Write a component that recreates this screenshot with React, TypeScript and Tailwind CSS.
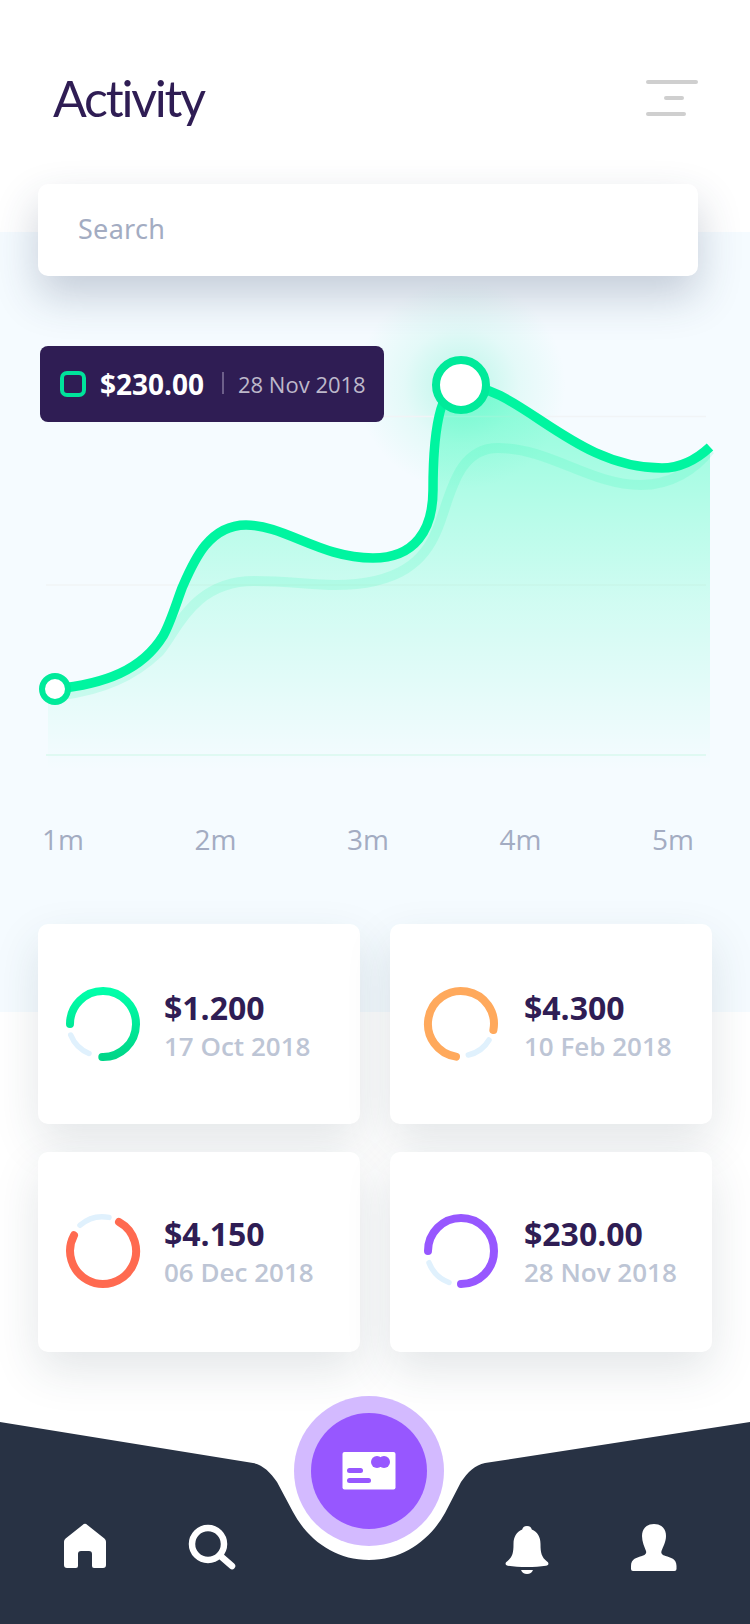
import React from "react";

const mainD =
  "M55 689 C105 684 142 670 163 636 C170 624 176 604 182 588 C193 563 208 525 246 525 C285 525 320 558 373 558 C415 558 433 530 433 490 C433 440 438 385 461 385 C520 385 572 468 662 468 C680 468 696 460 710 447";
const backD =
  "M62 695 C105 690 135 675 158 653 C175 636 190 581 254 581 C290 581 310 585 335 585 C400 585 425 560 437 530 C450 500 455 448 498 448 C550 448 590 485 641 485 C670 485 695 470 710 450";
const areaD = `${mainD} L710 770 L48 770 L48 689 Z`;

type Ring = {
  amount: string;
  date: string;
  arc: string;
  light: string;
  stroke: string;
  pad: string;
  gap: string;
  shift: string;
  ringShift: string;
};

const cards: Ring[] = [
  { amount: "$1.200", date: "17 Oct 2018", arc: "M-33 0 A33 33 0 1 1 -0.7 33", light: "M-32.3 11 A34 34 0 0 0 -14 29.5", stroke: "url(#ringGreen)", pad: "pl-[27px]", gap: "ml-[23px]", shift: "mt-[5px]", ringShift: "mt-0" },
  { amount: "$4.300", date: "10 Feb 2018", arc: "M-5 32.6 A33 33 0 1 1 32.4 6", light: "M7.3 31 A32 32 0 0 0 28 16", stroke: "#ffa95c", pad: "pl-[33px]", gap: "ml-[25px]", shift: "mt-[5px]", ringShift: "mt-0" },
  { amount: "$4.150", date: "06 Dec 2018", arc: "M16 -29 A33 33 0 1 1 -29 -15.7", light: "M-23 -25.7 A34 34 0 0 1 6 -33.6", stroke: "#ff6a50", pad: "pl-[27px]", gap: "ml-[23px]", shift: "mt-[1px]", ringShift: "-mt-[2px]" },
  { amount: "$230.00", date: "28 Nov 2018", arc: "M-33 0 A33 33 0 1 1 0 33", light: "M-32 11.7 A34 34 0 0 0 -12 31.5", stroke: "#9757ff", pad: "pl-[33px]", gap: "ml-[25px]", shift: "mt-[1px]", ringShift: "-mt-[2px]" },
];

function Card({ c }: { c: Ring }) {
  return (
    <div className={`h-[200px] rounded-[10px] bg-white shadow-[0_18px_46px_rgba(40,60,80,0.13)] flex items-center ${c.pad}`}>
      <svg width="76" height="76" viewBox="-38 -38 76 76" className={`shrink-0 ${c.ringShift}`}>
        <defs>
          <linearGradient id="ringGreen" x1="0" y1="0" x2="0" y2="1">
            <stop offset="0" stopColor="#00ffa9" />
            <stop offset="1" stopColor="#00d688" />
          </linearGradient>
        </defs>
        <path d={c.light} fill="none" stroke="#e0f1fd" strokeWidth="5.5" strokeLinecap="round" />
        <path d={c.arc} fill="none" stroke={c.stroke} strokeWidth="8" strokeLinecap="round" />
      </svg>
      <div className={`${c.gap} ${c.shift}`}>
        <div className="text-[32px] leading-[38px] font-bold text-[#2f1d54]">{c.amount}</div>
        <div className="text-[26px] leading-[38px] font-semibold text-[#bdc5d5]">{c.date}</div>
      </div>
    </div>
  );
}

export default function App() {
  return (
    <div className="relative w-[750px] h-[1624px] overflow-hidden bg-white font-['Open_Sans',sans-serif]">
      <header className="relative h-[184px] pl-[53px] pr-[52px] flex justify-between">
        <h1 className="mt-[66px] font-['Lato',sans-serif] font-normal text-[50px] leading-[64px] tracking-[-2.2px] text-[#2f1d54]">
          Activity
        </h1>
        <div className="mt-[80px] w-[52px] flex flex-col gap-[12px]">
          <div className="h-[4px] w-[52px] rounded-full bg-[#cfcfcf]" />
          <div className="h-[4px] w-[20px] ml-[18px] rounded-full bg-[#cfcfcf]" />
          <div className="h-[4px] w-[40px] rounded-full bg-[#cfcfcf]" />
        </div>
      </header>

      <div className="relative z-10 mx-[38px] w-[660px] h-[92px] rounded-[10px] bg-white shadow-[0_20px_44px_rgba(40,60,90,0.24)] flex items-center pl-[40px] -mb-[44px]">
        <span className="font-['Noto_Sans',sans-serif] text-[27px] leading-[36px] -mt-[2px] tracking-[0.3px] text-[#a3acc2]">Search</span>
      </div>

      <section className="relative h-[780px] bg-[#f5fbff]">
        <div className="relative h-[578px]">
          <svg width="750" height="578" viewBox="0 232 750 578" className="block">
            <defs>
              <linearGradient id="area" gradientUnits="userSpaceOnUse" x1="0" y1="385" x2="0" y2="770">
                <stop offset="0" stopColor="#00ffa8" stopOpacity="0.42" />
                <stop offset="0.3" stopColor="#00ffa8" stopOpacity="0.27" />
                <stop offset="0.56" stopColor="#00ffa8" stopOpacity="0.15" />
                <stop offset="0.82" stopColor="#00ffa8" stopOpacity="0.06" />
                <stop offset="1" stopColor="#00ffa8" stopOpacity="0" />
              </linearGradient>
              <radialGradient id="glow">
                <stop offset="0" stopColor="#00e6a0" stopOpacity="0.24" />
                <stop offset="0.55" stopColor="#00e6a0" stopOpacity="0.07" />
                <stop offset="1" stopColor="#00e6a0" stopOpacity="0" />
              </radialGradient>
            </defs>
            <circle cx="461" cy="385" r="105" fill="url(#glow)" />
            <line x1="46" x2="706" y1="416.5" y2="416.5" stroke="#f1f4f6" strokeWidth="1.5" />
            <line x1="46" x2="706" y1="585" y2="585" stroke="#f1f4f6" strokeWidth="1.5" />
            <path d={areaD} fill="url(#area)" />
            <line x1="46" x2="706" y1="755" y2="755" stroke="#d9f8ee" strokeWidth="1.5" />
            <path d={backD} fill="none" stroke="#00f5a0" strokeOpacity="0.13" strokeWidth="10" />
            <path d={mainD} fill="none" stroke="#00f5a0" strokeWidth="9.5" />
            <circle cx="55" cy="689" r="13" fill="#fff" stroke="#00ea9a" strokeWidth="6" />
            <circle cx="461" cy="385" r="25" fill="#fff" stroke="#00ea9a" strokeWidth="8" />
          </svg>
          <div className="absolute left-[40px] top-[114px] w-[344px] h-[76px] rounded-[8px] bg-[#2f1d54] flex items-center pl-[20px]">
            <div className="w-[26px] h-[26px] rounded-[7px] border-[4px] border-[#00e39b]" />
            <span className="ml-[14px] w-[112px] text-[28px] leading-[32px] font-bold text-white">$230.00</span>
            <div className="ml-[10px] w-[2px] h-[22px] bg-[#6d5f8a] -mt-[2px]" />
            <span className="ml-[14px] text-[22px] leading-[28px] text-[#bdb8ca]">28 Nov 2018</span>
          </div>
        </div>
        <div className="h-[58px] flex justify-between pl-[42px] pr-[56px] items-center text-[28px] text-[#a3acc2]">
          <span>1m</span>
          <span>2m</span>
          <span>3m</span>
          <span>4m</span>
          <span>5m</span>
        </div>
      </section>

      <div className="relative ml-[38px] -mt-[88px] w-[674px] grid grid-cols-[322px_322px] gap-x-[30px] gap-y-[28px]">
        {cards.map((c) => (
          <Card key={c.amount} c={c} />
        ))}
      </div>

      <nav className="relative h-[272px]">
        <svg width="750" height="272" viewBox="0 1352 750 272" className="absolute inset-0 block">
          <path
            d="M0 1422 L253 1463 C263 1465 270 1472 277 1482 L293 1512 C308 1540 335 1560 369 1560 C403 1560 430 1540 445 1513 L461 1482 C468 1472 475 1465 485 1463 L750 1422 V1624 H0 Z"
            fill="#283244"
          />
        </svg>

        <div className="absolute left-[294px] top-[44px] w-[150px] h-[150px] rounded-full bg-[#d3baff] flex items-center justify-center">
          <div className="w-[116px] h-[116px] rounded-full bg-[#9757ff] flex items-center justify-center">
            <svg width="54" height="38" viewBox="0 0 54 38">
              <rect x="0.5" y="0" width="53" height="37.5" rx="2" fill="#fff" />
              <rect x="5" y="16" width="16" height="5" rx="2.5" fill="#9757ff" />
              <rect x="5" y="26" width="24" height="5" rx="2.5" fill="#9757ff" />
              <circle cx="35" cy="10" r="6" fill="#9757ff" />
              <circle cx="42" cy="10" r="6" fill="#9757ff" />
            </svg>
          </div>
        </div>

        <div className="absolute left-0 right-0 top-[170px] flex items-start">
          <svg className="ml-[63px]" width="44" height="52" viewBox="0 0 44 52" fill="#fff">
            <path d="M19.6 3 a3.5 3.5 0 0 1 4.8 0 L41.4 16.4 q1.6 1.4 1.6 3.4 V43 a3 3 0 0 1 -3 3 H31 a2 2 0 0 1 -2 -2 V32 q0 -3 -3 -3 H18 q-3 0 -3 3 V44 a2 2 0 0 1 -2 2 H4 a3 3 0 0 1 -3 -3 V19.8 q0 -2 1.6 -3.4 Z" />
          </svg>
          <svg className="ml-[81px]" width="48" height="52" viewBox="0 0 48 52" fill="none" stroke="#fff">
            <circle cx="20" cy="22" r="16" strokeWidth="6.5" />
            <path d="M32.5 34 L44 44" strokeWidth="6.5" strokeLinecap="round" />
          </svg>
          <svg className="ml-[268px]" width="46" height="52" viewBox="0 0 46 52" fill="#fff">
            <path d="M23 4 c3 0 4.4 1.6 4.8 3.6 C33.5 10 36.5 15 36.5 22 c0 9 1 13 6.5 17.5 c2.5 1.8 1.5 3.8 -1 4.3 c-5.5 1 -12 1.2 -19 1.2 s-13.5 -0.2 -19 -1.2 c-2.5 -0.5 -3.5 -2.5 -1 -4.3 C8.5 35 9.5 31 9.5 22 c0 -7 3 -12 8.7 -14.4 c0.4 -2 1.8 -3.6 4.8 -3.6 Z" />
            <path d="M17 48 h12 q-1.5 4 -6 4 t-6 -4 Z" />
          </svg>
          <svg className="ml-[80px]" width="48" height="52" viewBox="0 0 48 52" fill="#fff">
            <path d="M24 2 c8 0 12 5 12 12 c0 6 -3 11 -4.5 15 c-0.8 2.6 1 4 4 5 c5 1.6 11 2.6 11 10 v3 a2 2 0 0 1 -2 2 H3 a2 2 0 0 1 -2 -2 v-3 c0 -7.4 6 -8.4 11 -10 c3 -1 4.8 -2.4 4 -5 C14.5 25 12 20 12 14 C12 7 16 2 24 2 Z" />
          </svg>
        </div>
      </nav>
    </div>
  );
}
